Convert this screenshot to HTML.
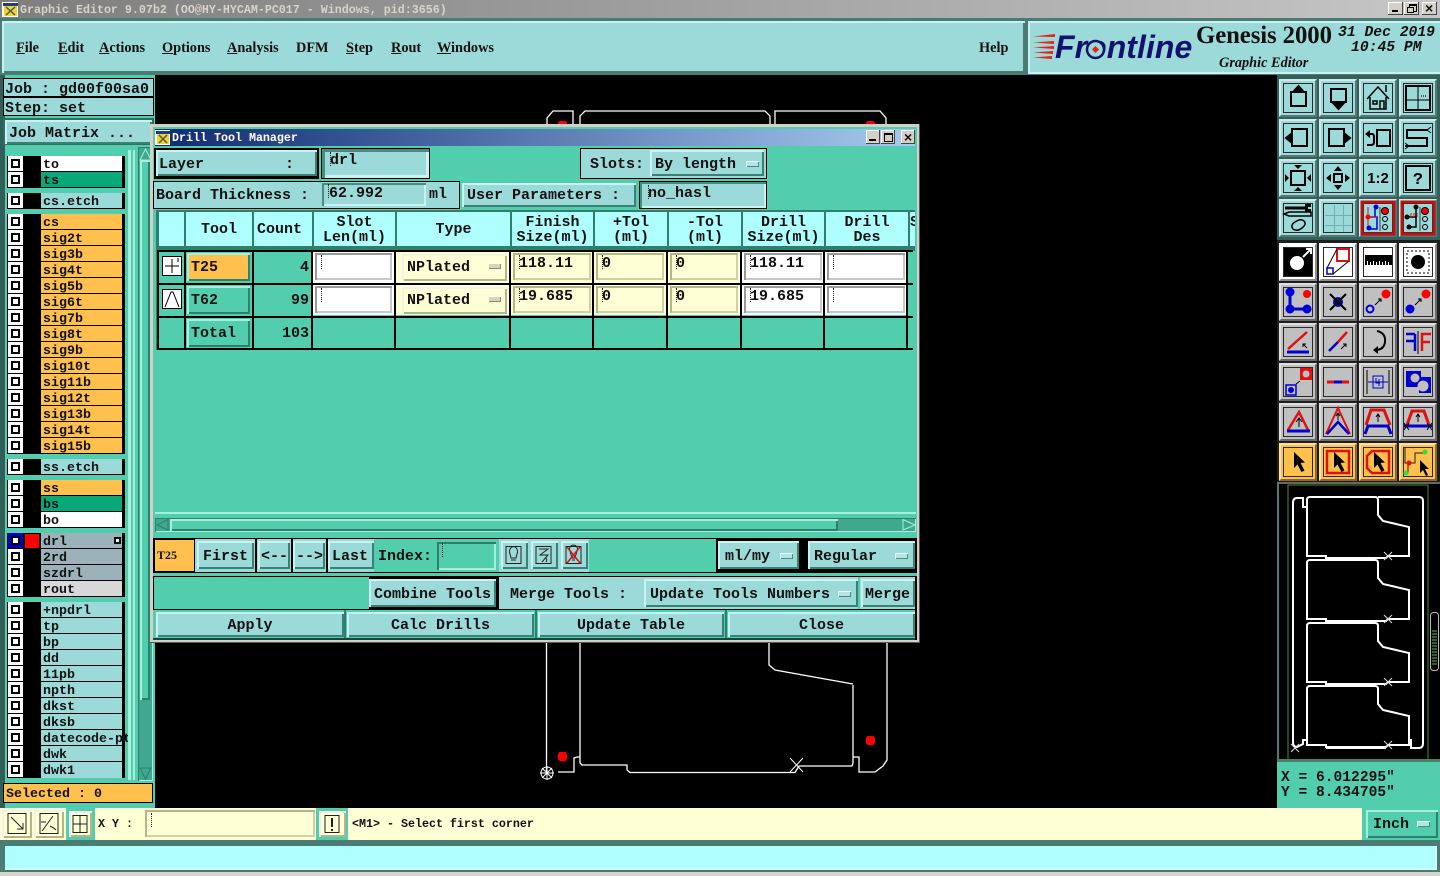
<!DOCTYPE html>
<html><head><meta charset="utf-8"><title>Graphic Editor</title>
<style>
html,body{margin:0;padding:0;background:#000;width:1440px;height:876px;overflow:hidden}
body{position:relative;font:bold 15px/18px "Liberation Mono",monospace;color:#111}
div,span.a,b.a,svg{position:absolute;display:block}
.t{white-space:pre}
.bt{background:#9cd9d9;box-shadow:inset 2px 2px 0 #c9f3f3,inset -2px -2px 0 #3b8074}
.tb{background:#52ceae;box-shadow:inset 2px 2px 0 #a5efdc,inset -2px -2px 0 #2f7f6d}
.in{background:#9cd9d9;box-shadow:inset 3px 3px 0 #4a8a80,inset -3px -3px 0 #c9f3f3}
.intl{background:#52ceae;box-shadow:inset 2px 2px 0 #2f7f6d,inset -2px -2px 0 #a5efdc}
.wh{background:#fff;box-shadow:inset 2px 2px 0 #9a9a9a,inset -2px -2px 0 #c8c8c8}
.ye{background:#ffffd5;box-shadow:inset 2px 2px 0 #b5b58a,inset -2px -2px 0 #d0d0a8}
.yb{background:#ffffd5;box-shadow:inset 2px 2px 0 #f4f4e4,inset -2px -2px 0 #b5b58a}
.c{width:3px;height:14px;border-left:1px dotted #222;margin-left:1px}
.op{width:13px;height:6px;background:#b4e4e4;box-shadow:inset 1px 1px 0 #e0ffff,inset -1px -1px 0 #4a8a80}
.r{left:7px;width:118px;height:16px;background:#000}
.r i{position:absolute;left:1px;top:0;width:9px;height:9px;border:3px solid #fff;background:#000}
.r i:after{content:"";position:absolute;left:2px;top:2px;width:5px;height:5px;background:#fff}
.r b{position:absolute;left:34px;top:0;width:79px;height:15px;padding-left:2px;font:bold 13.33px/19px "Liberation Mono",monospace;color:#111;white-space:nowrap}
.g{background:#9cd9d9}.o{background:#ffc04d}.w{background:#fff}.e{background:#08a878}.s{background:#9bb2ba}.lg{background:#d8d8d8}
.m{font:bold 14.3px/18px "Liberation Serif",serif;top:39px;color:#111}
.m u{text-decoration:underline}
.hd{background:#b0ffff;top:212px;height:34px;text-align:center;font:bold 15px/15px "Liberation Mono",monospace;white-space:pre;box-sizing:border-box}
.hd2{padding-top:3px}
.v{background:#000;width:2px;top:250px;height:100px}
.h{background:#000;left:157px;width:756px;height:2px}
</style></head><body>

<!-- title bar -->
<div style="left:0;top:0;width:1440px;height:18px;background:linear-gradient(90deg,#7e7e7e,#c6c6c6)"></div>
<svg style="left:2px;top:2px" width="16" height="15"><rect width="16" height="15" fill="#fff"/><rect x="1" y="1" width="15" height="3" fill="#223a80"/><rect x="2" y="4" width="13" height="10" fill="#e8d830"/><path d="M4 5l9 8M13 5l-9 8" stroke="#555" stroke-width="1.5"/></svg>
<div class="t" style="left:20px;top:2px;font:bold 11.67px/16px 'Liberation Mono',monospace;color:#d8d4cc">Graphic Editor 9.07b2 (OO@HY-HYCAM-PC017 - Windows, pid:3656)</div>
<div style="left:1388px;top:2px;width:15px;height:13px;background:#d4d0c8;box-shadow:inset -1px -1px 0 #444,inset 1px 1px 0 #fff"></div>
<div style="left:1392px;top:10px;width:6px;height:2px;background:#000"></div>
<div style="left:1404px;top:2px;width:15px;height:13px;background:#d4d0c8;box-shadow:inset -1px -1px 0 #444,inset 1px 1px 0 #fff"></div>
<div style="left:1409px;top:4px;width:6px;height:5px;border:1px solid #000;border-top-width:2px"></div>
<div style="left:1407px;top:7px;width:5px;height:4px;border:1px solid #000;background:#d4d0c8"></div>
<div style="left:1422px;top:2px;width:15px;height:13px;background:#d4d0c8;box-shadow:inset -1px -1px 0 #444,inset 1px 1px 0 #fff"></div>
<div style="left:1425px;top:1px;font:bold 14px/15px 'Liberation Sans',sans-serif">×</div>

<!-- menu -->
<div style="left:0;top:18px;width:1440px;height:57px;background:#4a7c74"></div>
<div class="bt" style="left:2px;top:21px;width:1023px;height:52px;box-shadow:inset 2px 2px 0 #c9f3f3,inset -2px -2px 0 #4a7c74"></div>
<div class="m" style="left:16px"><u>F</u>ile</div>
<div class="m" style="left:58px"><u>E</u>dit</div>
<div class="m" style="left:99px"><u>A</u>ctions</div>
<div class="m" style="left:162px"><u>O</u>ptions</div>
<div class="m" style="left:227px"><u>A</u>nalysis</div>
<div class="m" style="left:296px">DFM</div>
<div class="m" style="left:346px"><u>S</u>tep</div>
<div class="m" style="left:391px"><u>R</u>out</div>
<div class="m" style="left:437px"><u>W</u>indows</div>
<div class="m" style="left:979px">Help</div>

<!-- logo panel -->
<div class="bt" style="left:1028px;top:21px;width:412px;height:53px;box-shadow:inset 2px 2px 0 #c9f3f3,inset 0 -2px 0 #c9f3f3"></div>
<svg style="left:1032px;top:32px" width="26" height="28"><g fill="#e8201c"><path d="M1 4.500L23 2V5Z"/><path d="M1 10.500L22 9V12Z"/><path d="M1 15.500L22 14V17Z"/><path d="M1 20.500L21 19V22Z"/><path d="M1 25.500L20 24V27Z"/></g></svg>
<div class="t" style="left:1055px;top:28px;font:italic bold 32px/38px 'Liberation Sans',sans-serif;color:#12126e;letter-spacing:.05px">Frontline</div>
<svg style="left:1084px;top:38px" width="24" height="24"><circle cx="11.500" cy="11.500" r="8.500" fill="#9cd9d9" stroke="#12126e" stroke-width="2.500"/><path d="M11.500 8L15 11.500L11.500 15L8 11.500Z" fill="#e8201c"/></svg>
<div class="t" style="left:1196px;top:20px;font:bold 24.8px/32px 'Liberation Serif',serif;color:#111;letter-spacing:-.1px">Genesis 2000</div>
<div class="t" style="left:1219px;top:54px;font:italic bold 14.3px/18px 'Liberation Serif',serif;color:#111">Graphic Editor</div>
<div class="t" style="left:1338px;top:24px;font:italic bold 14.7px/18px 'Liberation Mono',monospace">31 Dec 2019</div>
<div class="t" style="left:1351px;top:39px;font:italic bold 14.7px/18px 'Liberation Mono',monospace">10:45 PM</div>

<!-- canvas drawings -->
<svg style="left:0;top:0" width="1440" height="876">
<g fill="none" stroke="#fff" stroke-width="1.3">
<path d="M547 130V118L553 111H573V130M580 130V116L585 111H765L770 116V130M775 130V111H880L886 118V130"/>
<path d="M546.5 640V772M558 772H574V758L577 757H580V640M580 757V763L582 765H627V770L630 772.5H795L799 766H852L853 763V685M853 757H859V772H875L883 766L887 760V640M769 640V665L775 670L853 684"/>
<path d="M540 773H554M547 766V780M542 768L552 778M552 768L542 778M790 758L803 772M803 758L790 772" stroke-width="1"/>
</g>
<circle cx="547" cy="773" r="6" fill="none" stroke="#fff"/>
<rect x="558" y="752" width="9" height="9" rx="2.5" fill="#f00"/><rect x="866" y="736" width="9" height="9" rx="2.5" fill="#f00"/>
<rect x="558" y="121" width="9" height="9" rx="2.5" fill="#f00"/><rect x="866" y="121" width="9" height="9" rx="2.5" fill="#f00"/>
</svg>

<!-- left panel -->
<div style="left:0;top:75px;width:155px;height:733px;background:#52ceae"></div>
<div style="left:0;top:75px;width:5px;height:733px;background:#2f5f58"></div>
<div style="left:3px;top:78px;width:151px;height:38px;background:#000"></div>
<div class="g t" style="left:4px;top:79px;width:148px;height:17px;line-height:21px;padding-left:1px;font-size:15px">Job : gd00f00sa0</div>
<div class="g t" style="left:4px;top:98px;width:148px;height:17px;line-height:21px;padding-left:1px;font-size:15px">Step: set</div>
<div style="left:3px;top:118px;width:151px;height:27px;background:#2f6f60"></div>
<div class="bt t" style="left:5px;top:120px;width:143px;height:24px;line-height:27px;padding-left:4px">Job Matrix ...</div>

<!-- layer list -->
<div class="r" style="top:156px"><i></i><b class="w">to</b></div>
<div class="r" style="top:172px"><i></i><b class="e">ts</b></div>
<div class="r" style="top:193px"><i></i><b class="g">cs.etch</b></div>
<div class="r" style="top:214px"><i></i><b class="o">cs</b></div>
<div class="r" style="top:230px"><i></i><b class="o">sig2t</b></div>
<div class="r" style="top:246px"><i></i><b class="o">sig3b</b></div>
<div class="r" style="top:262px"><i></i><b class="o">sig4t</b></div>
<div class="r" style="top:278px"><i></i><b class="o">sig5b</b></div>
<div class="r" style="top:294px"><i></i><b class="o">sig6t</b></div>
<div class="r" style="top:310px"><i></i><b class="o">sig7b</b></div>
<div class="r" style="top:326px"><i></i><b class="o">sig8t</b></div>
<div class="r" style="top:342px"><i></i><b class="o">sig9b</b></div>
<div class="r" style="top:358px"><i></i><b class="o">sig10t</b></div>
<div class="r" style="top:374px"><i></i><b class="o">sig11b</b></div>
<div class="r" style="top:390px"><i></i><b class="o">sig12t</b></div>
<div class="r" style="top:406px"><i></i><b class="o">sig13b</b></div>
<div class="r" style="top:422px"><i></i><b class="o">sig14t</b></div>
<div class="r" style="top:438px"><i></i><b class="o">sig15b</b></div>
<div class="r" style="top:459px"><i></i><b class="g">ss.etch</b></div>
<div class="r" style="top:480px"><i></i><b class="o">ss</b></div>
<div class="r" style="top:496px"><i></i><b class="e">bs</b></div>
<div class="r" style="top:512px"><i></i><b class="w">bo</b></div>
<div class="r" style="top:533px"><i style="border-color:#0000c0"></i><b class="s">drl</b></div>
<div style="left:25px;top:534px;width:14px;height:14px;background:#f00"></div>
<div style="left:115px;top:538px;width:3px;height:3px;border:1px solid #111;background:#fff;outline:1px solid #111"></div>
<div class="r" style="top:549px"><i></i><b class="s">2rd</b></div>
<div class="r" style="top:565px"><i></i><b class="s">szdrl</b></div>
<div class="r" style="top:581px"><i></i><b class="lg">rout</b></div>
<div class="r" style="top:602px"><i></i><b class="g">+npdrl</b></div>
<div class="r" style="top:618px"><i></i><b class="g">tp</b></div>
<div class="r" style="top:634px"><i></i><b class="g">bp</b></div>
<div class="r" style="top:650px"><i></i><b class="g">dd</b></div>
<div class="r" style="top:666px"><i></i><b class="g">11pb</b></div>
<div class="r" style="top:682px"><i></i><b class="g">npth</b></div>
<div class="r" style="top:698px"><i></i><b class="g">dkst</b></div>
<div class="r" style="top:714px"><i></i><b class="g">dksb</b></div>
<div class="r" style="top:730px"><i></i><b class="g" style="overflow:visible">datecode-pt</b></div>
<div style="left:121px;top:735px;width:5px;height:6px;border-radius:3px;background:#111"></div>
<div class="r" style="top:746px"><i></i><b class="g">dwk</b></div>
<div class="r" style="top:762px"><i></i><b class="g" style="height:16px">dwk1</b></div>

<!-- layer scrollbars -->
<div style="left:128px;top:150px;width:3px;height:630px;background:#a5efdc"></div>
<div style="left:133px;top:150px;width:2px;height:630px;background:#a5efdc"></div>
<div style="left:138px;top:147px;width:15px;height:634px;background:#3fa88e;box-shadow:inset 1px 1px 0 #2f7f6d,inset -1px -1px 0 #a5efdc"></div>
<div class="tb" style="left:140px;top:160px;width:10px;height:540px"></div>
<svg style="left:139px;top:148px" width="13" height="13"><path d="M6.500 1L12 12H1z" fill="#3fa88e" stroke="#a5efdc"/></svg>
<svg style="left:139px;top:767px" width="13" height="13"><path d="M1 1H12L6.500 12z" fill="#3fa88e" stroke="#2f7f6d"/></svg>
<div style="left:3px;top:783px;width:150px;height:20px;background:#000"></div>
<div class="o t" style="left:4px;top:784px;width:146px;height:18px;line-height:22px;padding-left:2px;font-size:13.33px">Selected : 0</div>

<!-- bottom bar -->
<div style="left:0;top:808px;width:1440px;height:68px;background:#4a7c74"></div>
<div style="left:0;top:808px;width:1440px;height:32px;background:#ffffd5"></div>
<div class="yb" style="left:2px;top:810px;width:30px;height:28px"></div>
<div class="yb" style="left:34px;top:810px;width:30px;height:28px"></div>
<div style="left:66px;top:808px;width:29px;height:32px;background:#52ceae"></div>
<div style="left:69px;top:811px;width:23px;height:26px;background:#ffffd5;box-shadow:inset 2px 2px 0 #eee,inset -2px -2px 0 #b5b58a"></div>
<div class="t" style="left:98px;top:815px;font-size:11.67px">X Y :</div>
<div class="ye" style="left:145px;top:810px;width:170px;height:27px"></div><div class="c" style="left:150px;top:813px"></div>
<div style="left:316px;top:808px;width:32px;height:32px;background:#52ceae"></div>
<div style="left:319px;top:811px;width:27px;height:26px;background:#ffffd5;box-shadow:inset 2px 2px 0 #eee,inset -2px -2px 0 #b5b58a"></div>
<svg style="left:0;top:808px" width="348" height="32" fill="none" stroke="#222"><rect x="8" y="5.500" width="18" height="20"/><path d="M11 9l12 12M23 15v6h-6"/><rect x="40" y="5.500" width="18" height="20"/><path d="M42 23L53 8M46 14h-5M50 18q4 2 6 4"/><rect x="73" y="7.500" width="14" height="17"/><path d="M73 16h14M80 7v17"/><rect x="325" y="7.500" width="14" height="17"/><path d="M332 10v9M332 21v2" stroke-width="2"/></svg>
<div class="t" style="left:352px;top:815px;font:bold 11.67px/18px 'Liberation Mono',monospace">&lt;M1&gt; - Select first corner</div>
<div style="left:1362px;top:808px;width:78px;height:32px;background:#52ceae"></div>
<div class="bt t" style="left:1366px;top:810px;width:72px;height:28px;line-height:29px;padding-left:7px;box-sizing:border-box;background:#52ceae;box-shadow:inset 2px 2px 0 #a5efdc,inset -2px -2px 0 #2f7f6d">Inch</div>
<div class="op" style="left:1417px;top:821px"></div>
<div style="left:3px;top:844px;width:1434px;height:26px;background:#b0ffff;box-shadow:inset 2px 2px 0 #4a7c74,inset -2px -2px 0 #d8ffff"></div>
<div style="left:0;top:872px;width:1440px;height:4px;background:#d8d4cc"></div>

<!-- right toolbars -->
<svg style="left:0;top:0" width="1440" height="876">
<defs>
<g id="b"><rect width="38" height="38"/><path d="M0 0H38L36 2H2V36L0 38Z" fill="#fff" opacity=".5"/><path d="M38 38H0L2 36H36V2L38 0Z" fill="#000" opacity=".45"/><rect x="4.500" y="4.500" width="29" height="29" fill="none" stroke="#2a2a2a"/></g>
<path id="cur" d="M15 9V25L18.500 21.500L22.500 29L25.500 27.500L21.500 20L26 19.500Z" fill="#000"/>
<path id="pc" d="M1307 500Q1307 497 1310 497H1375Q1378 497 1378 500V515L1383 521L1409 527V556H1388L1386 558H1326V556H1307Z" fill="none" stroke="#fff" stroke-width="2"/>
</defs>
<rect x="1277" y="75" width="163" height="165" fill="#33605a"/>
<rect x="1277" y="240" width="163" height="242" fill="#1e1e1e"/>
<g fill="#9cd9d9">
<use href="#b" x="1279" y="79"/><use href="#b" x="1319" y="79"/><use href="#b" x="1359" y="79"/><use href="#b" x="1399" y="79"/>
<use href="#b" x="1279" y="119"/><use href="#b" x="1319" y="119"/><use href="#b" x="1359" y="119"/><use href="#b" x="1399" y="119"/>
<use href="#b" x="1279" y="159"/><use href="#b" x="1319" y="159"/><use href="#b" x="1359" y="159"/><use href="#b" x="1399" y="159"/>
<use href="#b" x="1279" y="199"/><use href="#b" x="1319" y="199"/><use href="#b" x="1359" y="199"/><use href="#b" x="1399" y="199"/>
</g>
<g fill="#fff">
<use href="#b" x="1279" y="243"/><use href="#b" x="1319" y="243"/><use href="#b" x="1359" y="243"/><use href="#b" x="1399" y="243"/>
</g>
<g fill="#c0c0c0">
<use href="#b" x="1279" y="283"/><use href="#b" x="1319" y="283"/><use href="#b" x="1359" y="283"/><use href="#b" x="1399" y="283"/>
<use href="#b" x="1279" y="323"/><use href="#b" x="1319" y="323"/><use href="#b" x="1359" y="323"/><use href="#b" x="1399" y="323"/>
<use href="#b" x="1279" y="363"/><use href="#b" x="1319" y="363"/><use href="#b" x="1359" y="363"/><use href="#b" x="1399" y="363"/>
<use href="#b" x="1279" y="403"/><use href="#b" x="1319" y="403"/><use href="#b" x="1359" y="403"/><use href="#b" x="1399" y="403"/>
</g>
<g fill="#ffc04d">
<use href="#b" x="1279" y="443"/><use href="#b" x="1319" y="443"/><use href="#b" x="1359" y="443"/><use href="#b" x="1399" y="443"/>
</g>
<!-- row 0 -->
<g fill="none" stroke="#000" stroke-width="2">
<g transform="translate(1279,79)"><rect x="12" y="13" width="15" height="14"/><path d="M19.500 7L15 12H24Z" fill="#000"/></g>
<g transform="translate(1319,79)"><rect x="12" y="10" width="15" height="13"/><path d="M19.500 30L15 25H24Z" fill="#000"/></g>
<g transform="translate(1359,79)" stroke-width="1.500"><path d="M8 20L19 8L30 20M11 18V30H27V18M14 22h4v3h-4zM21 30v-8h4v8M27 6v7"/></g>
<g transform="translate(1399,79)"><rect x="7" y="7" width="24" height="24"/><path d="M8 21H30M19 8V30" stroke-width="1"/><path d="M22 17h6" stroke="#555" stroke-dasharray="1 1"/></g>
<g transform="translate(1279,119)"><rect x="13" y="10" width="15" height="17"/><path d="M7 19L12 15V23Z" fill="#000"/></g>
<g transform="translate(1319,119)"><rect x="10" y="10" width="15" height="17"/><path d="M31 19L26 15V23Z" fill="#000"/></g>
<g transform="translate(1359,119)"><rect x="18" y="11" width="13" height="16"/><path d="M9 15h4q2 0 2 3v5q0 3-3 3H8" /><path d="M6 15L11 11V19Z" fill="#000" stroke="none"/></g>
<g transform="translate(1399,119)"><path d="M29 11H8V19H28V27H6"/><path d="M32 8l-4 3 4 3M6 24l4 3-4 3" stroke-width="1"/></g>
<g transform="translate(1279,159)"><rect x="12" y="12" width="14" height="14"/></g>
<g transform="translate(1319,159)"><rect x="15" y="15" width="8" height="8"/></g>
<g transform="translate(1399,159)"><rect x="7" y="7" width="24" height="24"/></g>
</g>
<g fill="#000">
<g transform="translate(1279,159)"><path d="M19 10L15 6H23ZM19 28L15 32H23ZM10 19L6 15V23ZM28 19L32 15V23Z"/></g>
<g transform="translate(1319,159)"><path d="M19 7L15 12H23ZM19 31L15 26H23ZM7 19L12 15V23ZM31 19L26 15V23Z"/></g>
</g>
<text x="1378" y="183" text-anchor="middle" font-family="Liberation Sans" font-weight="bold" font-size="15">1:2</text>
<text x="1418" y="184" text-anchor="middle" font-family="Liberation Mono" font-weight="bold" font-size="17">?</text>
<!-- row 3 -->
<g transform="translate(1279,199)" fill="none" stroke="#000" stroke-width="1.500"><path d="M6 9H27" stroke-width="3"/><path d="M26 5h6v3h-3v2h3v3h-6z" fill="#000" stroke="none"/><path d="M5 15L10 13H32V17H10Z"/><path d="M14 30q-3-4 2-7q6-4 9-1q3 3-2 7q-5 4-9 1Z"/></g>
<g stroke="#6fb0b0" fill="none"><path d="M1325 215.500H1352M1325 225.500H1352M1334.500 205V232M1343.500 205V232"/></g>
<g transform="translate(1359,199)"><rect x="3" y="3" width="32" height="32" fill="none" stroke="#c01010" stroke-width="3"/><path d="M9 18H16V8H18M16 18H18V30H11" fill="none" stroke="#0000d0" stroke-width="1.500"/><path d="M9 8V28M9 18H18" stroke="#e01010" fill="none" stroke-width="1"/><circle cx="9" cy="18" r="2.500" fill="#f00"/><circle cx="17" cy="8" r="2.500" fill="#00d"/><circle cx="10" cy="29" r="2.500" fill="#00d"/><circle cx="26" cy="12" r="3.500" fill="#f00" stroke="#000"/><circle cx="26" cy="20" r="2.500" fill="none" stroke="#000"/><circle cx="26" cy="28" r="2.500" fill="none" stroke="#000"/><path d="M21 8V32" stroke="#000" stroke-width=".7"/></g>
<g transform="translate(1399,199)"><rect x="3" y="3" width="32" height="32" fill="none" stroke="#c01010" stroke-width="3"/><path d="M9 18H18M17 8V28H11" fill="none" stroke="#000" stroke-width="1.500"/><path d="M12 18V14M15 18V14M18 18V14" stroke="#e01010"/><circle cx="8" cy="18" r="2.500"/><circle cx="17" cy="8" r="2.500"/><circle cx="10" cy="28" r="2.500"/><circle cx="26" cy="12" r="3.500" fill="#f00" stroke="#000"/><circle cx="26" cy="20" r="2.500" fill="none" stroke="#000"/><circle cx="26" cy="28" r="2.500" fill="none" stroke="#000"/><path d="M21 8V32" stroke="#000" stroke-width=".7"/></g>
<!-- group 2 row 0 -->
<g transform="translate(1279,243)"><rect x="5" y="5" width="28" height="28" fill="#000"/><circle cx="18" cy="20" r="7" fill="#fff"/><path d="M24 14L32 6M27 6H32V11" stroke="#fff" stroke-width="2" fill="none"/></g>
<g transform="translate(1319,243)"><rect x="18" y="6" width="12" height="12" fill="none" stroke="#e01010" stroke-width="2"/><rect x="8" y="25" width="6" height="6" fill="none" stroke="#0000d0" stroke-width="1.500"/><path d="M8 25L18 6M14 31L30 18" stroke="#000"/></g>
<g transform="translate(1359,243)"><rect x="6" y="12" width="27" height="10" fill="#000"/><path d="M8.500 18V22M11.500 19V22M14.500 18V22M17.500 19V22M20.500 18V22M23.500 19V22M26.500 18V22M29.500 19V22" stroke="#fff"/></g>
<g transform="translate(1399,243)"><rect x="8" y="8" width="22" height="22" fill="none" stroke="#000" stroke-dasharray="2 2"/><circle cx="19" cy="19" r="7" fill="#000"/></g>
<!-- row 1 -->
<g transform="translate(1279,283)"><path d="M11 9V26H29" stroke="#0000d0" stroke-width="3" fill="none"/><circle cx="11" cy="9" r="4.500" fill="#00d"/><circle cx="28" cy="11" r="4" fill="#f00"/><circle cx="11" cy="26" r="4.500" fill="#00d"/><circle cx="28" cy="26" r="4.500" fill="#00d"/></g>
<g transform="translate(1319,283)"><circle cx="19" cy="19" r="5" fill="#00a"/><path d="M11 11L27 27M27 11L11 27" stroke="#000" stroke-width="2"/></g>
<g transform="translate(1359,283)"><circle cx="11" cy="26" r="3.500" fill="none" stroke="#00d" stroke-width="2"/><circle cx="27" cy="11" r="4.500" fill="#f00"/><path d="M16 22L22 16M19 16H22V19" stroke="#000" fill="none"/></g>
<g transform="translate(1399,283)"><circle cx="11" cy="26" r="4.500" fill="#00d"/><circle cx="27" cy="11" r="4.500" fill="#f00"/><path d="M16 22L22 16M19 16H22V19" stroke="#000" fill="none"/></g>
<!-- row 2 -->
<g transform="translate(1279,323)"><path d="M9 26L28 9" stroke="#e01010" stroke-width="2.500"/><path d="M8 29H30" stroke="#0000d0" stroke-width="3"/><path d="M28 25L24 21M24 24V21H27" stroke="#000" fill="none"/></g>
<g transform="translate(1319,323)"><path d="M19 19L28 9" stroke="#e01010" stroke-width="2.500"/><path d="M10 28L19 19" stroke="#0000d0" stroke-width="2.500"/><path d="M22 26L27 21M24 21H27V24" stroke="#000" fill="none"/></g>
<g transform="translate(1359,323)" fill="none" stroke="#000" stroke-width="2"><path d="M18 8Q27 10 26 19Q25 27 16 27"/><path d="M14 27L19 23V31Z" fill="#000" stroke="none"/></g>
<g transform="translate(1399,323)"><path d="M19 8V31" stroke="#000"/><path d="M16 11H7M16 11V28M7 18H16" stroke="#0000d0" stroke-width="2.500" fill="none"/><path d="M23 28V11H32M23 19H31" stroke="#e01010" stroke-width="2.500" fill="none"/></g>
<!-- row 3 -->
<g transform="translate(1279,363)"><rect x="21" y="5" width="12" height="12" fill="#e01010"/><circle cx="27" cy="11" r="3.500" fill="#c0c0c0"/><rect x="7" y="22" width="10" height="10" fill="none" stroke="#0000d0" stroke-width="1.500"/><circle cx="12" cy="27" r="3" fill="#00d"/><path d="M17 21L21 18" stroke="#000"/></g>
<g transform="translate(1319,363)"><path d="M8 19H30" stroke="#e01010" stroke-width="3"/><path d="M15 19H23" stroke="#0000d0" stroke-width="3"/></g>
<g transform="translate(1359,363)" fill="none"><path d="M8 7V31M30 7V31" stroke="#000"/><path d="M9 19H29" stroke="#0000d0"/><rect x="14" y="13" width="10" height="12" stroke="#0000d0"/><path d="M17 15V20H21M20 16V23" stroke="#0000d0"/></g>
<g transform="translate(1399,363)"><path d="M7 8H22V14H32V30H20V24H7Z" fill="#0000d0"/><circle cx="16" cy="15" r="4.500" fill="#c0c0c0"/><circle cx="24" cy="23" r="5.500" fill="#c0c0c0"/></g>
<!-- row 4 -->
<g transform="translate(1279,403)"><path d="M9 27L20 9L29 27" fill="none" stroke="#e01010" stroke-width="2.500"/><path d="M8 28H31" stroke="#0000d0" stroke-width="3"/><path d="M20 16V24M17 19L20 15L23 19" stroke="#000" fill="none"/></g>
<g transform="translate(1319,403)"><path d="M7 31L19 5L31 31" fill="none" stroke="#e01010" stroke-width="2"/><path d="M8 31L19 19L30 31" fill="none" stroke="#0000d0" stroke-width="2.500"/><path d="M19 11V17M17 13L19 10L21 13" stroke="#000" fill="none"/></g>
<g transform="translate(1359,403)"><path d="M7 22L12 7H25L31 22" fill="none" stroke="#e01010" stroke-width="3"/><path d="M6 31L9 23H29L32 31" fill="none" stroke="#0000d0" stroke-width="3"/><path d="M19 12V19M17 14L19 11L21 14" stroke="#000" fill="none"/></g>
<g transform="translate(1399,403)"><path d="M8 22L13 8H25L30 22" fill="none" stroke="#e01010" stroke-width="3"/><path d="M5 23H33" stroke="#0000d0" stroke-width="3"/><path d="M5 20L10 27M10 20L5 27M28 20L33 27M33 20L28 27" stroke="#000"/><path d="M19 12V19M17 14L19 11L21 14" stroke="#000" fill="none"/></g>
<!-- row 5 -->
<use href="#cur" x="1279" y="443"/>
<g transform="translate(1319,443)"><rect x="8" y="8" width="22" height="22" fill="none" stroke="#e01010" stroke-width="2.500"/><use href="#cur" x="0" y="0"/></g>
<g transform="translate(1359,443)"><path d="M13 8H30V30H13L8 25V13Z" fill="none" stroke="#e01010" stroke-width="2.500"/><use href="#cur" x="0" y="0"/></g>
<g transform="translate(1399,443)"><path d="M6 5V20H9M9 20V30H7M11 20H16V10H24" stroke="#222" fill="none"/><circle cx="10" cy="20" r="2.500" fill="#e01010"/><circle cx="26" cy="9" r="2.500" fill="#30e040"/><circle cx="7" cy="30" r="2.500" fill="#30e040"/><path d="M21 17V30L24 27L27 33L29 32L26 26L30 26Z" fill="#000"/></g>

<!-- minimap -->
<rect x="1277" y="482" width="163" height="2" fill="#666"/>
<rect x="1277" y="482" width="2" height="280" fill="#4a7c74"/>
<path d="M1288 759V485H1428V759M1277 759.500H1440" stroke="#4d8a35" fill="none"/>
<use href="#pc"/><use href="#pc" y="63"/><use href="#pc" y="126"/><use href="#pc" y="189"/>
<path d="M1307 507H1303V498H1297Q1293 498 1293 503V742Q1293 747 1297 747L1303 744V740H1307M1378 497H1419Q1423 497 1423 501V743Q1423 748 1419 748H1411V740H1409M1326 748H1386" fill="none" stroke="#fff" stroke-width="2"/>
<path d="M1291 744L1299 752M1299 744L1291 752M1384 552L1392 560M1392 552L1384 560M1384 615L1392 623M1392 615L1384 623M1384 678L1392 686M1392 678L1384 686M1384 741L1392 749M1392 741L1384 749" stroke="#ddd"/>
<rect x="1430.500" y="612.500" width="8" height="58" rx="3" fill="#000" stroke="#bbb"/>
<path d="M1432 631H1437M1432 634H1437M1432 637H1437M1432 640H1437M1432 643H1437M1432 646H1437M1432 649H1437M1432 652H1437M1432 655H1437M1432 658H1437M1432 661H1437M1432 664H1437" stroke="#5fc050"/>
<rect x="1277" y="760" width="163" height="2" fill="#4a7c74"/>
<rect x="1277" y="762" width="163" height="46" fill="#52ceae"/>
</svg>
<div class="t" style="left:1281px;top:769px;font-size:14.6px;line-height:18px">X = 6.012295"</div>
<div class="t" style="left:1281px;top:784px;font-size:14.6px;line-height:18px">Y = 8.434705"</div>

<!-- DIALOG -->
<div style="left:150px;top:124px;width:770px;height:519px;background:#d4d0c8;box-shadow:inset -1px -1px 0 #555"></div>
<div style="left:153px;top:127px;width:764px;height:513px;background:#52ceae"></div>
<div style="left:155px;top:129px;width:760px;height:17px;background:linear-gradient(90deg,#0f2a70,#a6caf0)"></div>
<svg style="left:155px;top:130px" width="16" height="15"><rect width="15" height="15" fill="#fff"/><rect x="1" y="1" width="14" height="3" fill="#223a80"/><rect x="2" y="4" width="12" height="10" fill="#e8d830"/><path d="M4 5l8 8M12 5l-8 8" stroke="#555" stroke-width="1.500"/></svg>
<div class="t" style="left:172px;top:130px;font:bold 11.67px/17px 'Liberation Mono',monospace;color:#fff">Drill Tool Manager</div>
<div style="left:866px;top:130px;width:14px;height:14px;background:#d4d0c8;box-shadow:inset -1px -1px 0 #444,inset 1px 1px 0 #fff"></div>
<div style="left:869px;top:139px;width:7px;height:2px;background:#000"></div>
<div style="left:881px;top:130px;width:14px;height:14px;background:#d4d0c8;box-shadow:inset -1px -1px 0 #444,inset 1px 1px 0 #fff"></div>
<div style="left:884px;top:133px;width:7px;height:6px;border:1px solid #000;border-top-width:2px"></div>
<div style="left:901px;top:130px;width:14px;height:14px;background:#d4d0c8;box-shadow:inset -1px -1px 0 #444,inset 1px 1px 0 #fff"></div>
<div style="left:904px;top:129px;font:bold 14px/16px 'Liberation Sans',sans-serif">×</div>

<!-- row 1 -->
<div style="left:154px;top:148px;width:165px;height:31px;background:#000"></div>
<div class="bt t" style="left:156px;top:150px;width:161px;height:26px;line-height:30px;padding-left:3px;box-sizing:border-box">Layer         :</div>
<div style="left:321px;top:148px;width:109px;height:31px;background:#000"></div>
<div class="in t" style="left:322px;top:149px;width:107px;height:29px;padding-left:8px;box-sizing:border-box;line-height:23px">drl</div><div class="c" style="left:329px;top:152px"></div>
<div style="left:580px;top:148px;width:187px;height:31px;background:#000"></div>
<div class="g t" style="left:581px;top:149px;width:185px;height:29px;line-height:32px;padding-left:9px;box-sizing:border-box">Slots:</div>
<div class="bt t" style="left:650px;top:150px;width:114px;height:26px;line-height:30px;padding-left:5px;box-sizing:border-box">By length</div>
<div class="op" style="left:746px;top:161px"></div>
<!-- row 2 -->
<div style="left:153px;top:181px;width:307px;height:28px;background:#000"></div>
<div class="g t" style="left:154px;top:182px;width:305px;height:26px;line-height:28px;padding-left:2px;box-sizing:border-box">Board Thickness :</div>
<div class="in t" style="left:322px;top:183px;width:104px;height:23px;padding-left:7px;box-sizing:border-box;line-height:22px;box-shadow:inset 2px 2px 0 #4a8a80,inset -2px -2px 0 #c9f3f3">62.992</div><div class="c" style="left:327px;top:184px"></div>
<div class="t" style="left:429px;top:186px">ml</div>
<div class="bt t" style="left:462px;top:183px;width:174px;height:24px;line-height:25px;padding-left:5px;box-sizing:border-box">User Parameters :</div>
<div style="left:639px;top:181px;width:128px;height:28px;background:#000"></div>
<div class="in t" style="left:640px;top:182px;width:126px;height:26px;padding-left:8px;box-sizing:border-box;line-height:23px;box-shadow:inset 2px 2px 0 #4a8a80,inset -2px -2px 0 #c9f3f3">no_hasl</div><div class="c" style="left:647px;top:185px"></div>

<!-- table frame -->
<div style="left:156px;top:210px;width:759px;height:41px;background:#2f7f6d"></div>
<div style="left:156px;top:210px;width:3px;height:140px;background:#2f7f6d"></div>
<div class="hd" style="left:159px;width:25px"></div>
<div class="hd" style="left:186px;width:66px;line-height:36px">Tool</div>
<div class="hd" style="left:254px;width:58px;line-height:36px;text-align:left;padding-left:3px">Count</div>
<div class="hd hd2" style="left:314px;width:81px">Slot
Len(ml)</div>
<div class="hd" style="left:397px;width:113px;line-height:36px">Type</div>
<div class="hd hd2" style="left:512px;width:81px">Finish
Size(ml)</div>
<div class="hd hd2" style="left:595px;width:72px">+Tol
(ml)</div>
<div class="hd hd2" style="left:669px;width:72px">-Tol
(ml)</div>
<div class="hd hd2" style="left:743px;width:81px">Drill
Size(ml)</div>
<div class="hd hd2" style="left:826px;width:82px">Drill
Des</div>
<div class="hd hd2" style="left:910px;width:5px;text-align:left;overflow:hidden">S</div>

<!-- table body -->
<div style="left:396px;top:251px;width:114px;height:64px;background:#ffffd5"></div>
<div style="left:511px;top:251px;width:156px;height:64px;background:#ffffd5"></div>
<div style="left:668px;top:251px;width:73px;height:64px;background:#ffffd5"></div>
<div style="left:313px;top:251px;width:82px;height:64px;background:#fff"></div>
<div style="left:742px;top:251px;width:165px;height:64px;background:#fff"></div>
<div class="h" style="top:250px"></div><div class="h" style="top:283px"></div><div class="h" style="top:316px"></div><div class="h" style="top:348px"></div>
<div class="v" style="left:157px"></div><div class="v" style="left:184px"></div><div class="v" style="left:252px"></div><div class="v" style="left:311px"></div><div class="v" style="left:394px"></div><div class="v" style="left:509px"></div><div class="v" style="left:592px"></div><div class="v" style="left:666px"></div><div class="v" style="left:740px"></div><div class="v" style="left:823px"></div><div class="v" style="left:906px"></div>

<div style="left:162px;top:256px;width:18px;height:18px;background:#fff;border:1px solid #000"></div>
<div style="left:162px;top:289px;width:18px;height:18px;background:#fff;border:1px solid #000"></div>
<svg style="left:162px;top:256px" width="20" height="52" fill="none" stroke="#000"><path d="M10 3V17M3 10H17M16 2V6"/><path d="M3 51L9 36H11L17 51" /></svg>
<div style="left:187px;top:253px;width:63px;height:28px;background:#ffc04d;box-shadow:inset 2px 2px 0 #a5efdc,inset -2px -2px 0 #2f7f6d"></div>
<div class="t" style="left:191px;top:259px">T25</div>
<div class="tb" style="left:187px;top:286px;width:63px;height:28px"></div>
<div class="t" style="left:191px;top:292px">T62</div>
<div class="tb" style="left:187px;top:319px;width:63px;height:28px"></div>
<div class="t" style="left:191px;top:325px">Total</div>
<div class="t" style="left:300px;top:259px">4</div>
<div class="t" style="left:291px;top:292px">99</div>
<div class="t" style="left:282px;top:325px">103</div>

<div class="wh" style="left:315px;top:253px;width:77px;height:27px"></div><div class="c" style="left:320px;top:255px"></div>
<div class="wh" style="left:315px;top:286px;width:77px;height:27px"></div><div class="c" style="left:320px;top:288px"></div>
<div class="yb t" style="left:402px;top:254px;width:105px;height:27px;line-height:28px;padding-left:5px;box-sizing:border-box">NPlated</div><div class="op" style="left:488px;top:263px;background:#d8d8b0;box-shadow:inset 1px 1px 0 #fff,inset -1px -1px 0 #888"></div>
<div class="yb t" style="left:402px;top:287px;width:105px;height:27px;line-height:28px;padding-left:5px;box-sizing:border-box">NPlated</div><div class="op" style="left:488px;top:296px;background:#d8d8b0;box-shadow:inset 1px 1px 0 #fff,inset -1px -1px 0 #888"></div>

<div class="ye t" style="left:513px;top:253px;width:78px;height:27px;padding-left:6px;box-sizing:border-box;line-height:21px">118.11</div><div class="c" style="left:518px;top:255px"></div>
<div class="ye t" style="left:513px;top:286px;width:78px;height:27px;padding-left:6px;box-sizing:border-box;line-height:21px">19.685</div><div class="c" style="left:518px;top:288px"></div>
<div class="ye t" style="left:596px;top:253px;width:68px;height:27px;padding-left:6px;box-sizing:border-box;line-height:21px">0</div><div class="c" style="left:601px;top:255px"></div>
<div class="ye t" style="left:596px;top:286px;width:68px;height:27px;padding-left:6px;box-sizing:border-box;line-height:21px">0</div><div class="c" style="left:601px;top:288px"></div>
<div class="ye t" style="left:670px;top:253px;width:68px;height:27px;padding-left:6px;box-sizing:border-box;line-height:21px">0</div><div class="c" style="left:675px;top:255px"></div>
<div class="ye t" style="left:670px;top:286px;width:68px;height:27px;padding-left:6px;box-sizing:border-box;line-height:21px">0</div><div class="c" style="left:675px;top:288px"></div>
<div class="wh t" style="left:744px;top:253px;width:78px;height:27px;padding-left:6px;box-sizing:border-box;line-height:21px">118.11</div><div class="c" style="left:749px;top:255px"></div>
<div class="wh t" style="left:744px;top:286px;width:78px;height:27px;padding-left:6px;box-sizing:border-box;line-height:21px">19.685</div><div class="c" style="left:749px;top:288px"></div>
<div class="wh" style="left:827px;top:253px;width:78px;height:27px"></div><div class="c" style="left:832px;top:255px"></div>
<div class="wh" style="left:827px;top:286px;width:78px;height:27px"></div><div class="c" style="left:832px;top:288px"></div>

<!-- h scroll -->
<div style="left:155px;top:512px;width:761px;height:2px;background:#a5efdc"></div>
<div style="left:155px;top:518px;width:761px;height:14px;background:#3fa88e;box-shadow:inset 1px 1px 0 #2f7f6d,inset -1px -1px 0 #a5efdc"></div>
<div class="tb" style="left:170px;top:519px;width:668px;height:12px"></div>
<svg style="left:156px;top:519px" width="760" height="12"><path d="M12 0.500V11L1 6Z" fill="#3fa88e" stroke="#2f7f6d"/><path d="M747 0.500V11L759 6Z" fill="#3fa88e" stroke="#a5efdc"/></svg>

<!-- nav row -->
<div style="left:153px;top:538px;width:764px;height:35px;background:#000"></div>
<div style="left:374px;top:539px;width:342px;height:33px;background:#52ceae"></div>
<div class="o t" style="left:155px;top:540px;width:39px;height:31px;padding-left:2px;box-sizing:border-box;font:bold 12px/30px 'Liberation Serif',serif">T25</div>
<div style="left:195px;top:539px;width:179px;height:33px;background:#9cd9d9"></div>
<div class="bt t" style="left:197px;top:541px;width:57px;height:28px;line-height:32px;padding-left:6px;box-sizing:border-box">First</div>
<div style="left:255px;top:539px;width:2px;height:33px;background:#000"></div>
<div class="bt t" style="left:258px;top:541px;width:32px;height:28px;line-height:32px;padding-left:3px;box-sizing:border-box">&lt;--</div>
<div style="left:291px;top:539px;width:2px;height:33px;background:#000"></div>
<div class="bt t" style="left:293px;top:541px;width:32px;height:28px;line-height:32px;padding-left:3px;box-sizing:border-box">--&gt;</div>
<div style="left:326px;top:539px;width:2px;height:33px;background:#000"></div>
<div class="bt t" style="left:328px;top:541px;width:46px;height:28px;line-height:32px;padding-left:4px;box-sizing:border-box">Last</div>
<div class="t" style="left:378px;top:548px">Index:</div>
<div class="intl" style="left:437px;top:542px;width:59px;height:28px"></div><div class="c" style="left:441px;top:543px"></div>
<div style="left:499px;top:539px;width:90px;height:33px;background:#9cd9d9"></div>
<div class="bt" style="left:501px;top:541px;width:27px;height:28px"></div>
<div class="bt" style="left:531px;top:541px;width:27px;height:28px"></div>
<div class="bt" style="left:561px;top:541px;width:27px;height:28px"></div>
<svg style="left:500px;top:540px" width="90" height="30" fill="none" stroke="#222"><rect x="6" y="6.500" width="15" height="17"/><path d="M10 14a4 5 0 1 1 7 0l-1 4h-5zM11 20h5"/><rect x="36" y="6.500" width="15" height="17"/><path d="M39 9H48L40 15L48 15L42 22M46 18a3 3 0 0 1 0 4"/><rect x="66" y="6.500" width="15" height="17"/><path d="M70 11a4 4 0 1 1 7 0l-2 7H72zM72 20h3"/><path d="M67 7L80 23M80 7L67 23" stroke="#e01010" stroke-width="1.500"/></svg>
<div class="bt t" style="left:718px;top:541px;width:81px;height:28px;line-height:32px;padding-left:7px;box-sizing:border-box">ml/my</div><div class="op" style="left:780px;top:553px"></div>
<div class="bt t" style="left:808px;top:541px;width:107px;height:28px;line-height:32px;padding-left:6px;box-sizing:border-box">Regular</div><div class="op" style="left:895px;top:553px"></div>

<!-- merge row -->
<div style="left:153px;top:576px;width:764px;height:34px;background:#000"></div>
<div style="left:154px;top:577px;width:213px;height:32px;background:#52ceae"></div>
<div style="left:367px;top:577px;width:2px;height:32px;background:#52ceae"></div>
<div class="bt t" style="left:369px;top:579px;width:127px;height:28px;line-height:32px;padding-left:5px;box-sizing:border-box">Combine Tools</div>
<div style="left:499px;top:577px;width:416px;height:32px;background:#9cd9d9"></div>
<div class="t" style="left:510px;top:586px">Merge Tools :</div>
<div class="bt t" style="left:644px;top:579px;width:214px;height:28px;line-height:32px;padding-left:6px;box-sizing:border-box">Update Tools Numbers</div><div class="op" style="left:838px;top:591px"></div>
<div style="left:858px;top:577px;width:2px;height:32px;background:#52ceae"></div>
<div class="bt t" style="left:861px;top:579px;width:54px;height:28px;line-height:32px;padding-left:4px;box-sizing:border-box">Merge</div>

<!-- action row -->
<div style="left:153px;top:610px;width:764px;height:28px;background:#52ceae"></div>
<div style="left:153px;top:638px;width:764px;height:2px;background:#17463c"></div>
<div style="left:915px;top:576px;width:2px;height:64px;background:#000"></div>
<div class="bt t" style="left:156px;top:612px;width:188px;height:25px;line-height:27px;text-align:center">Apply</div>
<div style="left:344px;top:610px;width:2px;height:28px;background:#2f7f6d"></div>
<div class="bt t" style="left:347px;top:612px;width:187px;height:25px;line-height:27px;text-align:center">Calc Drills</div>
<div style="left:535px;top:610px;width:2px;height:28px;background:#2f7f6d"></div>
<div class="bt t" style="left:538px;top:612px;width:186px;height:25px;line-height:27px;text-align:center">Update Table</div>
<div style="left:725px;top:610px;width:2px;height:28px;background:#2f7f6d"></div>
<div class="bt t" style="left:728px;top:612px;width:187px;height:25px;line-height:27px;text-align:center">Close</div>
</body></html>
